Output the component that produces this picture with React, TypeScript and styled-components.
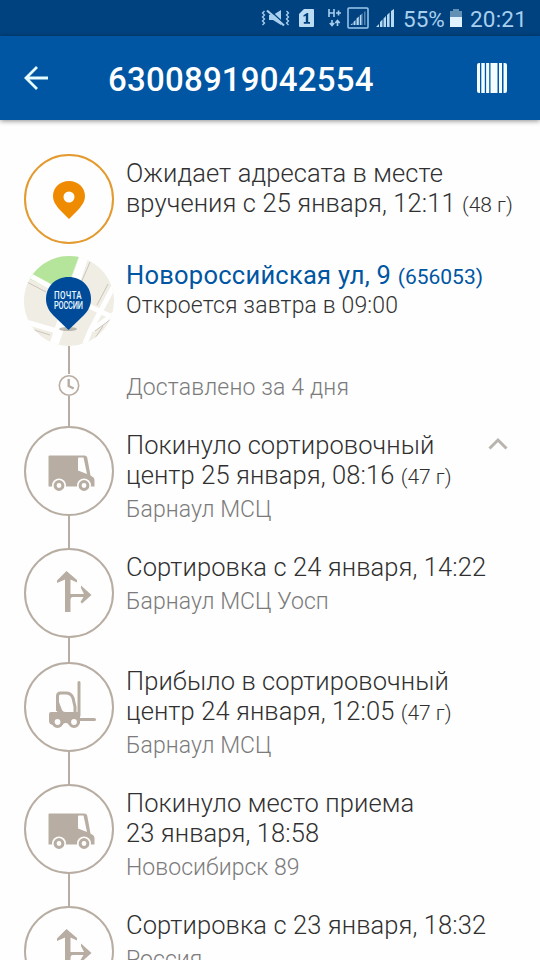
import React from 'react';
import styled, { createGlobalStyle } from 'styled-components';

const TAUPE = '#b8ada2';
const BLUE = '#0056a2';

const GlobalStyle = createGlobalStyle`
  * { box-sizing: border-box; }
  html, body { margin: 0; padding: 0; background: #fff; }
  body { font-family: Roboto, "Noto Sans", sans-serif; }
  svg { display: block; flex: none; }
`;

const Screen = styled.main`
  width: 540px;
  height: 960px;
  overflow: hidden;
  display: flex;
  flex-direction: column;
  background: #fefefe;
`;

const StatusBar = styled.div`
  height: 36px;
  flex: none;
  padding-left: 261px;
  display: grid;
  grid-template-columns: 38px 29px 19px 29px 27px 47px 20px auto;
  align-items: center;
  background: #00427f;
  color: #a9cfee;
`;

const StatusText = styled.span<{ $width: number }>`
  width: ${(p) => p.$width}px;
  padding-top: 2px;
  font-size: 22.5px;
  line-height: 34px;
  letter-spacing: ${(p) => (p.$width > 50 ? 0.2 : 0)}px;
  white-space: nowrap;
`;

const AppBar = styled.header`
  height: 84px;
  flex: none;
  display: flex;
  align-items: center;
  padding: 0 33px 0 24px;
  background: ${BLUE};
  color: #fff;
  box-shadow: 0 1px 5px rgba(0, 0, 0, 0.45);
  z-index: 1;
`;

const Title = styled.h1`
  flex: 1;
  margin: 0 0 0 60px;
  padding-top: 3px;
  font-size: 33px;
  line-height: 40px;
  font-weight: 500;
  letter-spacing: 0.22px;
`;

const BarButton = styled.button`
  padding: 0;
  border: 0;
  background: none;
  color: inherit;
`;

const Timeline = styled.ol`
  list-style: none;
  margin: 0;
  padding: 34px 24px 0;
`;

const Row = styled.li<{ $height: number }>`
  height: ${(p) => p.$height}px;
  display: flex;
  gap: 12px;
`;

const Rail = styled.div`
  width: 90px;
  flex: none;
  display: flex;
  flex-direction: column;
  align-items: center;
`;

const Node = styled.div<{ $color?: string }>`
  width: 90px;
  height: 90px;
  flex: none;
  display: flex;
  align-items: center;
  justify-content: center;
  border: 2px solid ${(p) => p.$color ?? TAUPE};
  border-radius: 50%;
`;

const Connector = styled.div`
  width: 2px;
  flex: 1;
  background: ${TAUPE};
`;

const Details = styled.div<{ $top: number }>`
  flex: 1;
  padding-top: ${(p) => p.$top}px;
  white-space: nowrap;
`;

const Headline = styled.div<{ $accent?: boolean }>`
  height: 30px;
  font-size: 25.5px;
  line-height: 30px;
  font-weight: ${(p) => (p.$accent ? 400 : 300)};
  letter-spacing: ${(p) => (p.$accent ? 0.25 : 0.1)}px;
  color: ${(p) => (p.$accent ? BLUE : '#303030')};
`;

const Weight = styled.span`
  font-size: 21px;
  line-height: 0;
  letter-spacing: 0;
`;

const Note = styled.div<{ $dark?: boolean; $gap?: number; $wide?: boolean }>`
  margin-top: ${(p) => p.$gap ?? 0}px;
  font-size: 23px;
  line-height: 30px;
  font-weight: 300;
  letter-spacing: ${(p) => (p.$wide ? 0.15 : 0.06)}px;
  color: ${(p) => (p.$dark ? '#333' : '#7b7b7b')};
`;

const Toggle = styled.button`
  align-self: flex-start;
  margin: 11px 8px 0 0;
  padding: 0;
  border: 0;
  background: none;
`;

const MuteIcon = () => (
  <svg width="30" height="20" viewBox="0 0 30 20" fill="none" stroke="currentColor">
    <path d="M3.5 3l-2 2 2 2-2 2 2 2-2 2 2 2-2 2M25.500 3l2 2-2 2 2 2-2 2 2 2-2 2 2 2" strokeWidth="1.3" />
    <path d="M8 7h4l8-5v15l-8-5H8z" fill="currentColor" stroke="none" />
    <path d="M8 1.500l16 15" stroke="#00427f" strokeWidth="1.600" />
    <path d="M6 2.500l17 15" strokeWidth="2.200" />
  </svg>
);

const SimIcon = () => (
  <svg width="15" height="18" viewBox="0 0 15 18">
    <path d="M5 0h9q1 0 1 1v16q0 1-1 1H1q-1 0-1-1V5z" fill="#bcdcf4" />
    <path d="M4.500 6.200L8 4h1.200v9H11v1.700H4.800V13h2V6.800l-2.300.9z" fill="#00427f" />
  </svg>
);

const DataIcon = () => (
  <svg width="14" height="20" viewBox="0 0 14 20" fill="none" stroke="currentColor" strokeWidth="1.6">
    <path d="M1 1v8M6 1v8M1 5h5M8 5h5M10.500 2.500v5" />
    <path d="M4 12v5M1.800 15L4 17.500 6.200 15M9.500 18v-5M7.300 15l2.200-2.500 2.200 2.500" />
  </svg>
);

const BoxedSignalIcon = () => (
  <svg width="22" height="22" viewBox="0 0 22 22">
    <rect x="1" y="1" width="20" height="20" rx="1" fill="none" stroke="#9bc9ed" strokeWidth="1.5" />
    <path d="M3.500 18l2-2v2zM6.500 18v-3l2-2v5zM9.500 18v-6.500l2.300-2V18zM12.800 18V8.500l1.800-1.500V18z" fill="#b8d9f2" />
    <path d="M14.600 18V7l1-.8V18zM17 18V5l1.500-1v14z" fill="#5286b5" />
  </svg>
);

const SignalIcon = () => (
  <svg width="20" height="20" viewBox="0 0 20 20" fill="#b8d9f2">
    <path d="M0 19l3-3v3zM4 19v-5l2.500-2.500V19zM7.500 19v-8.500L10 8v11zM11 19V7l2.600-2.600V19zM15 19V3l3-2v18z" />
  </svg>
);

const BatteryIcon = () => (
  <svg width="12" height="18" viewBox="0 0 12 18">
    <path d="M0 2h3V0h6v2h3v7H0z" fill="#6291b5" />
    <path d="M0 8h12v10H0z" fill="#e1f2ff" />
  </svg>
);

const BackIcon = () => (
  <svg width="24" height="24" viewBox="0 0 24 24" fill="none" stroke="#e4fbff" strokeWidth="2.800">
    <path d="M24 12H2M13 1L2 12l11 11" />
  </svg>
);

const BarcodeIcon = () => (
  <svg width="30" height="30" viewBox="0 0 30 30">
    <rect width="30" height="30" rx="2" fill="#f3fcff" />
    <path d="M3 0h1.300v30H3zM7.800 0h1.300v30H7.800zM12.200 0h1.300v30h-1.300zM20.500 0h1.500v30h-1.500zM25 0h1.500v30H25z" fill={BLUE} />
  </svg>
);

const PlaceIcon = () => (
  <svg width="34" height="42" viewBox="0 -2 34 42">
    <path
      fillRule="evenodd"
      d="M17 1C8 1 1 7.500 1 16c0 6 4 10.500 7 14l9 9 9-9c3-3.500 7-8 7-14C33 7.500 26 1 17 1zm0 10.500a5.500 5.500 0 1 0 0 11 5.500 5.500 0 0 0 0-11z"
      fill="#ef8b00"
    />
  </svg>
);

const MapBadge = () => (
  <svg width="90" height="90" viewBox="0 0 90 90">
    <clipPath id="mapDisc">
      <circle cx="45" cy="45" r="45" />
    </clipPath>
    <g clipPath="url(#mapDisc)">
      <rect width="90" height="90" fill="#efede4" />
      <path d="M4 22L14 0h41L46 24 37 38z" fill="#b5e59b" />
      <path d="M61-2L28 94" stroke="#fff" strokeWidth="9" />
      <path d="M5 19l35 19 50 24M2 66l34 10M93 24L66 75l-8 20M68 74l25-18" stroke="#fff" strokeWidth="5" fill="none" />
      <path d="M3 26l19 10M7 73l19 6M66 6L54 34M84 28L73 49M87 63l-16 12M79 70L66 90" stroke="#cbc5bb" strokeWidth="1" fill="none" />
    </g>
    <ellipse cx="44" cy="73" rx="9" ry="2" fill="#aaa69e" opacity=".75" />
    <path d="M44.500 21C31 21 22 31 22 43c0 9 5 14 9 18l13.500 13L58 61c4-4 9-9 9-18 0-12-9-22-22.500-22z" fill="#004b99" />
    <g fill="#e9f8ff" fontFamily="Roboto, sans-serif" fontWeight="500" fontSize="10">
      <text transform="translate(30 42.500) scale(.8 1)" textLength="34.500">ПОЧТА</text>
      <text transform="translate(30 53) scale(.74 1)" textLength="39">РОССИИ</text>
    </g>
  </svg>
);

const ClockIcon = () => (
  <svg width="22" height="22" viewBox="0 0 22 22" fill="none" stroke={TAUPE}>
    <circle cx="11" cy="11.500" r="9.700" strokeWidth="1.600" />
    <path d="M10.700 5v7l5 2.500" strokeWidth="2.400" />
  </svg>
);

const VanIcon = () => (
  <svg width="52" height="42" viewBox="-4.500 -4.500 52 42">
    <path d="M2 1h35q2 0 2.700 2l3.300 18 3 2q1 1 1 3v6H1V2q0-1 1-1z" fill={TAUPE} />
    <path d="M31.500 3H36l3.500 16.500-9-3.500V4q0-1 1-1z" fill="#fefefe" />
    {[11.500, 36.500].map((x) => (
      <g key={x}>
        <circle cx={x} cy="31" r="7" fill="#fefefe" />
        <circle cx={x} cy="31" r="3.900" fill="none" stroke={TAUPE} strokeWidth="3" />
      </g>
    ))}
  </svg>
);

const SortIcon = () => (
  <svg width="46" height="44" viewBox="-10 0 46 44" fill={TAUPE}>
    <path d="M10.500 0L21 9v2.500l-6.500-3V23H28l-3-6V14.500l10.500 9.500L26 32.500l-1.500-1.500 3-5H17q-2.500 0-2.500 3v12H9V8.500L1 12V9.500z" />
  </svg>
);

const ForkliftIcon = () => (
  <svg width="54" height="54" viewBox="-6 0 54 54" fill="none" stroke={TAUPE}>
    <path d="M31 2.500v33M31 39.500h15.500" strokeWidth="3" strokeLinecap="round" />
    <path d="M9.500 31V16q0-3 3-3h5.500q5 0 7 5l2 9v6" strokeWidth="3" />
    <path d="M1 34q0-2 2-2h6l2-10 3 8q1 2 3 2h12q3 0 3 4v6q0 3-4 3H6q-5 0-5-4z" fill={TAUPE} stroke="none" />
    <path d="M14.500 46q0-3 3.200-3t3.200 3z" fill="#fefefe" stroke="none" />
    {[9.500, 26].map((x) => (
      <circle key={x} cx={x} cy="42" r="4.400" fill="#fefefe" strokeWidth="3" />
    ))}
  </svg>
);

const ChevronUpIcon = () => (
  <svg width="20" height="13" viewBox="0 0 20 13" fill="none" stroke="#b9b5ae" strokeWidth="3">
    <path d="M1.500 11.500L10 3l8.500 8.500" />
  </svg>
);

type Stop = {
  icon: React.ReactNode;
  lines: string[];
  weight?: string;
  place: string;
  height: number;
  open?: boolean;
};

const stops: Stop[] = [
  { icon: <VanIcon />, lines: ['Покинуло сортировочный', 'центр 25 января, 08:16'], weight: '(47 г)', place: 'Барнаул МСЦ', height: 122, open: true },
  { icon: <SortIcon />, lines: ['Сортировка с 24 января, 14:22'], place: 'Барнаул МСЦ Уосп', height: 114 },
  { icon: <ForkliftIcon />, lines: ['Прибыло в сортировочный', 'центр 24 января, 12:05'], weight: '(47 г)', place: 'Барнаул МСЦ', height: 122 },
  { icon: <VanIcon />, lines: ['Покинуло место приема', '23 января, 18:58'], place: 'Новосибирск 89', height: 122 },
  { icon: <SortIcon />, lines: ['Сортировка с 23 января, 18:32'], place: 'Россия', height: 114 },
];

export default function App() {
  return (
    <Screen>
      <GlobalStyle />
      <StatusBar>
        <MuteIcon />
        <SimIcon />
        <DataIcon />
        <BoxedSignalIcon />
        <SignalIcon />
        <StatusText $width={42}>55%</StatusText>
        <BatteryIcon />
        <StatusText $width={58}>20:21</StatusText>
      </StatusBar>
      <AppBar>
        <BarButton aria-label="Назад"><BackIcon /></BarButton>
        <Title>63008919042554</Title>
        <BarButton aria-label="Штрихкод"><BarcodeIcon /></BarButton>
      </AppBar>
      <Timeline>
        <Row $height={102}>
          <Rail><Node $color="#e39a2e"><PlaceIcon /></Node></Rail>
          <Details $top={4}>
            <Headline>Ожидает адресата в месте</Headline>
            <Headline>вручения с 25 января, 12:11 <Weight>(48 г)</Weight></Headline>
          </Details>
        </Row>
        <Row $height={118}>
          <Rail><MapBadge /><Connector /></Rail>
          <Details $top={4}>
            <Headline $accent>Новороссийская ул, 9 <Weight>(656053)</Weight></Headline>
            <Note $dark $wide $gap={1}>Откроется завтра в 09:00</Note>
          </Details>
        </Row>
        <Row $height={52}>
          <Rail><ClockIcon /><Connector /></Rail>
          <Details $top={0}><Note $wide $gap={-1}>Доставлено за 4 дня</Note></Details>
        </Row>
        {stops.map((stop) => (
          <Row key={stop.lines.join()} $height={stop.height}>
            <Rail><Node>{stop.icon}</Node><Connector /></Rail>
            <Details $top={4}>
              {stop.lines.map((line, i) => (
                <Headline key={line}>
                  {line}
                  {stop.weight && i === stop.lines.length - 1 && <> <Weight>{stop.weight}</Weight></>}
                </Headline>
              ))}
              <Note $gap={5}>{stop.place}</Note>
            </Details>
            {stop.open && <Toggle aria-label="Свернуть"><ChevronUpIcon /></Toggle>}
          </Row>
        ))}
      </Timeline>
    </Screen>
  );
}
